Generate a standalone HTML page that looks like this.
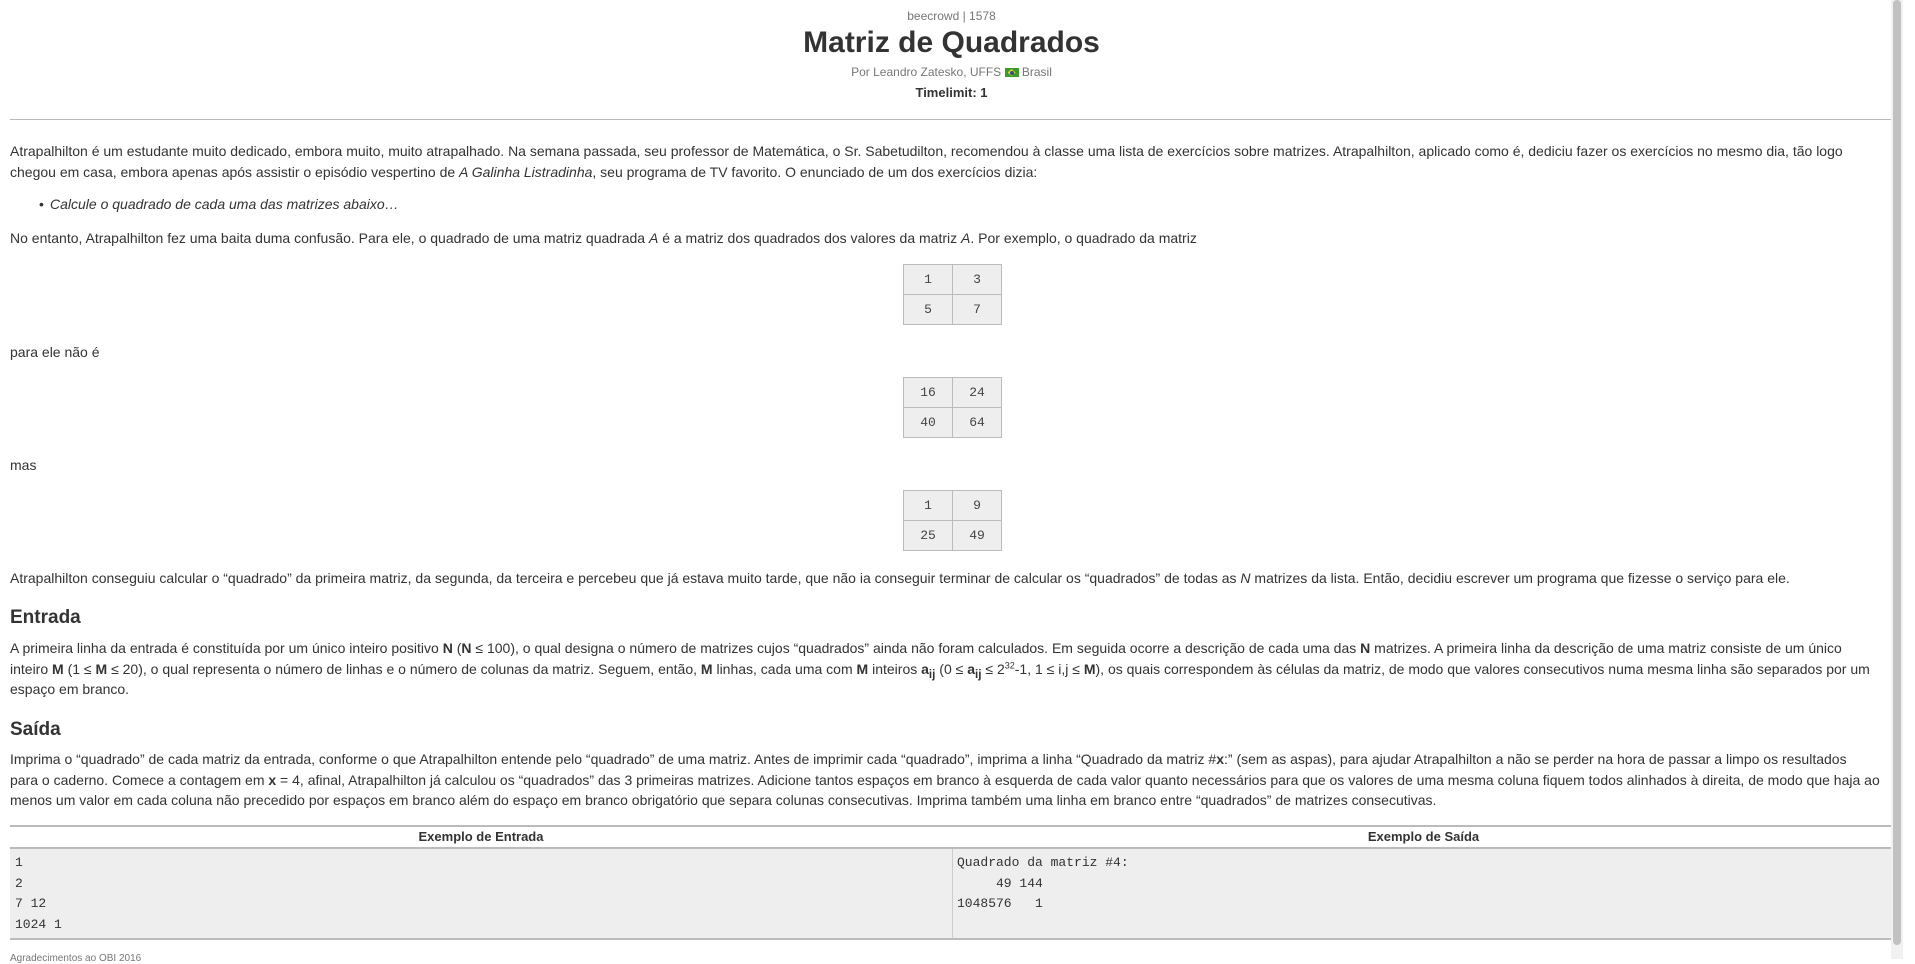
<!DOCTYPE html>
<html><head><meta charset="utf-8">
<style>
html,body{margin:0;padding:0;background:#fff;}
body{font-family:"Liberation Sans",sans-serif;color:#333;font-size:14px;width:1903px;position:relative;height:959px;overflow:hidden;}
.c{text-align:center;position:absolute;left:0;width:1903px;}
p,.l{position:absolute;left:10px;margin:0;white-space:nowrap;line-height:20.5px;}
sub,sup{line-height:0;}
h3{position:absolute;left:10px;margin:0;font-size:19px;font-weight:bold;color:#333;}
table.m{position:absolute;left:903px;border-collapse:collapse;background:#eee;font-family:"Liberation Mono",monospace;font-size:13px;color:#444;}
table.m td{border:1px solid #bbb;width:48px;height:29px;text-align:center;padding:0;}
.scroll{position:absolute;right:0;top:0;width:12px;height:959px;background:#f1f1f1;}
.thumb{position:absolute;right:2px;top:0;width:8px;height:945px;background:#c1c1c1;border-radius:4px;}
</style></head><body>
<div class="c" style="top:9px;font-size:12px;color:#777;">beecrowd | 1578</div>
<div class="c" style="top:26px;font-size:30px;font-weight:bold;color:#333;">Matriz de Quadrados</div>
<div class="c" style="top:65px;font-size:12px;color:#777;">Por Leandro Zatesko, UFFS <span style="display:inline-block;width:14px;height:9px;background:#3a9a2a;vertical-align:-1px;position:relative;"><span style="position:absolute;left:3px;top:1px;width:8px;height:7px;background:#e8d21a;clip-path:polygon(50% 0,100% 50%,50% 100%,0 50%);"></span><span style="position:absolute;left:5px;top:2.5px;width:4px;height:4px;border-radius:50%;background:#2a4a9a;"></span></span> Brasil</div>
<div class="c" style="top:85px;font-size:13px;font-weight:bold;color:#333;">Timelimit: 1</div>
<div style="position:absolute;left:10px;top:119px;width:1885px;height:1px;background:#bbb;"></div>

<p style="top:141px;">Atrapalhilton é um estudante muito dedicado, embora muito, muito atrapalhado. Na semana passada, seu professor de Matemática, o Sr. Sabetudilton, recomendou à classe uma lista de exercícios sobre matrizes. Atrapalhilton, aplicado como é, dediciu fazer os exercícios no mesmo dia, tão logo<br>chegou em casa, embora apenas após assistir o episódio vespertino de <i>A Galinha Listradinha</i>, seu programa de TV favorito. O enunciado de um dos exercícios dizia:</p>
<p style="top:194px;left:50px;"><span style="position:absolute;left:-11px;">•</span><i>Calcule o quadrado de cada uma das matrizes abaixo…</i></p>
<p style="top:228px;">No entanto, Atrapalhilton fez uma baita duma confusão. Para ele, o quadrado de uma matriz quadrada <i>A</i> é a matriz dos quadrados dos valores da matriz <i>A</i>. Por exemplo, o quadrado da matriz</p>
<table class="m" style="top:264px;"><tr><td>1</td><td>3</td></tr><tr><td>5</td><td>7</td></tr></table>
<p style="top:342px;">para ele não é</p>
<table class="m" style="top:377px;"><tr><td>16</td><td>24</td></tr><tr><td>40</td><td>64</td></tr></table>
<p style="top:455px;">mas</p>
<table class="m" style="top:490px;"><tr><td>1</td><td>9</td></tr><tr><td>25</td><td>49</td></tr></table>
<p style="top:568px;">Atrapalhilton conseguiu calcular o “quadrado” da primeira matriz, da segunda, da terceira e percebeu que já estava muito tarde, que não ia conseguir terminar de calcular os “quadrados” de todas as <i>N</i> matrizes da lista. Então, decidiu escrever um programa que fizesse o serviço para ele.</p>
<h3 style="top:607px;">Entrada</h3>
<p style="top:638px;">A primeira linha da entrada é constituída por um único inteiro positivo <b>N</b> (<b>N</b> ≤ 100), o qual designa o número de matrizes cujos “quadrados” ainda não foram calculados. Em seguida ocorre a descrição de cada uma das <b>N</b> matrizes. A primeira linha da descrição de uma matriz consiste de um único<br>inteiro <b>M</b> (1 ≤ <b>M</b> ≤ 20), o qual representa o número de linhas e o número de colunas da matriz. Seguem, então, <b>M</b> linhas, cada uma com <b>M</b> inteiros <b>a<sub>ij</sub></b> (0 ≤ <b>a<sub>ij</sub></b> ≤ 2<sup style="font-size:9px">32</sup>-1, 1 ≤ i,j ≤ <b>M</b>), os quais correspondem às células da matriz, de modo que valores consecutivos numa mesma linha são separados por um<br>espaço em branco.</p>
<h3 style="top:719px;">Saída</h3>
<p style="top:749px;">Imprima o “quadrado” de cada matriz da entrada, conforme o que Atrapalhilton entende pelo “quadrado” de uma matriz. Antes de imprimir cada “quadrado”, imprima a linha “Quadrado da matriz #<b>x</b>:” (sem as aspas), para ajudar Atrapalhilton a não se perder na hora de passar a limpo os resultados<br>para o caderno. Comece a contagem em <b>x</b> = 4, afinal, Atrapalhilton já calculou os “quadrados” das 3 primeiras matrizes. Adicione tantos espaços em branco à esquerda de cada valor quanto necessários para que os valores de uma mesma coluna fiquem todos alinhados à direita, de modo que haja ao<br>menos um valor em cada coluna não precedido por espaços em branco além do espaço em branco obrigatório que separa colunas consecutivas. Imprima também uma linha em branco entre “quadrados” de matrizes consecutivas.</p>

<div style="position:absolute;left:10px;top:825px;width:1885px;height:2px;background:#bbb;"></div>
<div style="position:absolute;left:10px;top:828px;width:942px;text-align:center;font-size:13px;font-weight:bold;line-height:18px;">Exemplo de Entrada</div>
<div style="position:absolute;left:952px;top:828px;width:943px;text-align:center;font-size:13px;font-weight:bold;line-height:18px;">Exemplo de Saída</div>
<div style="position:absolute;left:10px;top:847px;width:1885px;height:2px;background:#bbb;"></div>
<div style="position:absolute;left:10px;top:849px;width:1885px;height:89px;background:#eee;"></div>
<div style="position:absolute;left:952px;top:849px;width:1px;height:89px;background:#ccc;"></div>
<pre style="position:absolute;left:15px;top:853px;margin:0;font-family:'Liberation Mono',monospace;font-size:13px;line-height:20.5px;color:#333;">1
2
7 12
1024 1</pre>
<pre style="position:absolute;left:957px;top:853px;margin:0;font-family:'Liberation Mono',monospace;font-size:13px;line-height:20.5px;color:#333;">Quadrado da matriz #4:
     49 144
1048576   1</pre>
<div style="position:absolute;left:10px;top:938px;width:1885px;height:2px;background:#bbb;"></div>
<div style="position:absolute;left:10px;top:953px;font-size:10px;color:#777;">Agradecimentos ao OBI 2016</div>
<div class="scroll"><div class="thumb"></div></div>
</body></html>
